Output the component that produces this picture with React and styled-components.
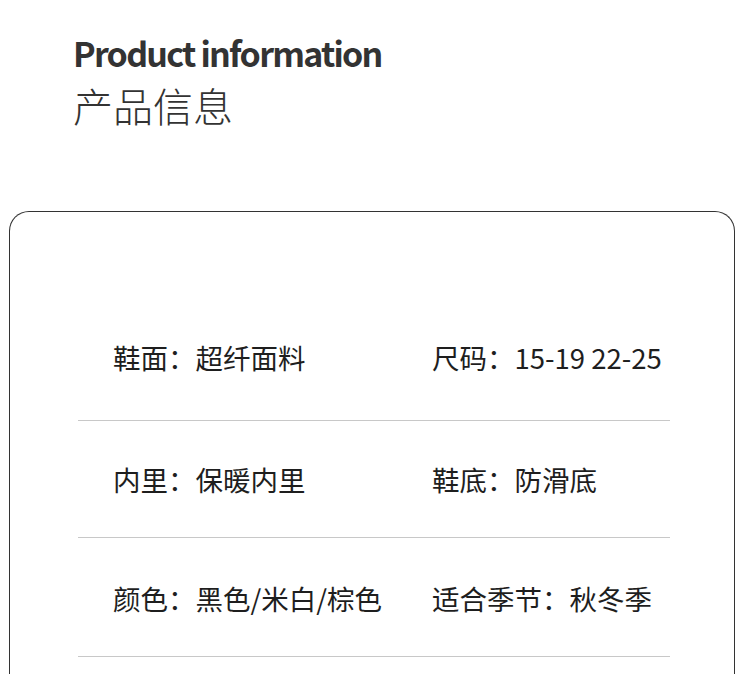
import React from 'react';
import styled, {createGlobalStyle} from 'styled-components';

const GlobalStyle = createGlobalStyle`
  html, body {
    margin: 0;
    padding: 0;
    background: #ffffff;
  }
  body {
    font-family: 'Noto Sans CJK SC', 'Noto Sans', sans-serif;
    overflow: hidden;
  }
`;

const Page = styled.div`
  width: 750px;
  height: 674px;
  overflow: hidden;
  background: #ffffff;
`;
const Header = styled.header`
  padding: 31px 0 0 73px;
  color: #333333;
`;
const TitleEn = styled.h1`
  margin: 0;
  font-family: 'Noto Sans CJK SC', sans-serif;
  font-size: 34px;
  font-weight: 700;
  line-height: 44px;
  letter-spacing: -1.75px;
`;
const TitleCn = styled.h2`
  margin: 2px 0 0;
  font-family: 'Noto Sans CJK SC', sans-serif;
  font-size: 40px;
  font-weight: 300;
  line-height: 56px;
`;
const Card = styled.section`
  margin: 0 15px 0 9px;
  margin-top: 78px;
  padding: 91px 64px 0 68px;
  min-height: 600px;
  border: 1.5px solid #333333;
  border-bottom: none;
  border-radius: 20px 20px 0 0;
`;
const Row = styled.div`
  display: grid;
  grid-template-columns: 319px 1fr;
  align-items: center;
  height: ${(p) => p.$height}px;
  padding: ${(p) => p.$top}px 0 ${(p) => p.$bottom}px 35px;
  box-sizing: border-box;
  border-bottom: 1px solid #c8c8c8;
`;
const Cell = styled.div`
  color: #1e1e1e;
  font-size: 27.5px;
  font-weight: 400;
  white-space: nowrap;
`;

const rows = [
  {height: 118, top: 0, bottom: 10, items: ['鞋面：超纤面料', '尺码：15-19 22-25']},
  {height: 117, top: 0, bottom: 0, items: ['内里：保暖内里', '鞋底：防滑底']},
  {height: 119, top: 2, bottom: 0, items: ['颜色：黑色/米白/棕色', '适合季节：秋冬季']},
];

const App = () => (
  <Page>
    <GlobalStyle />
    <Header>
      <TitleEn>Product information</TitleEn>
      <TitleCn>产品信息</TitleCn>
    </Header>
    <Card>
      {rows.map((row) => (
        <Row key={row.items[0]} $height={row.height} $top={row.top} $bottom={row.bottom}>
          {row.items.map((text) => (
            <Cell key={text}>{text}</Cell>
          ))}
        </Row>
      ))}
    </Card>
  </Page>
);

export default App;
